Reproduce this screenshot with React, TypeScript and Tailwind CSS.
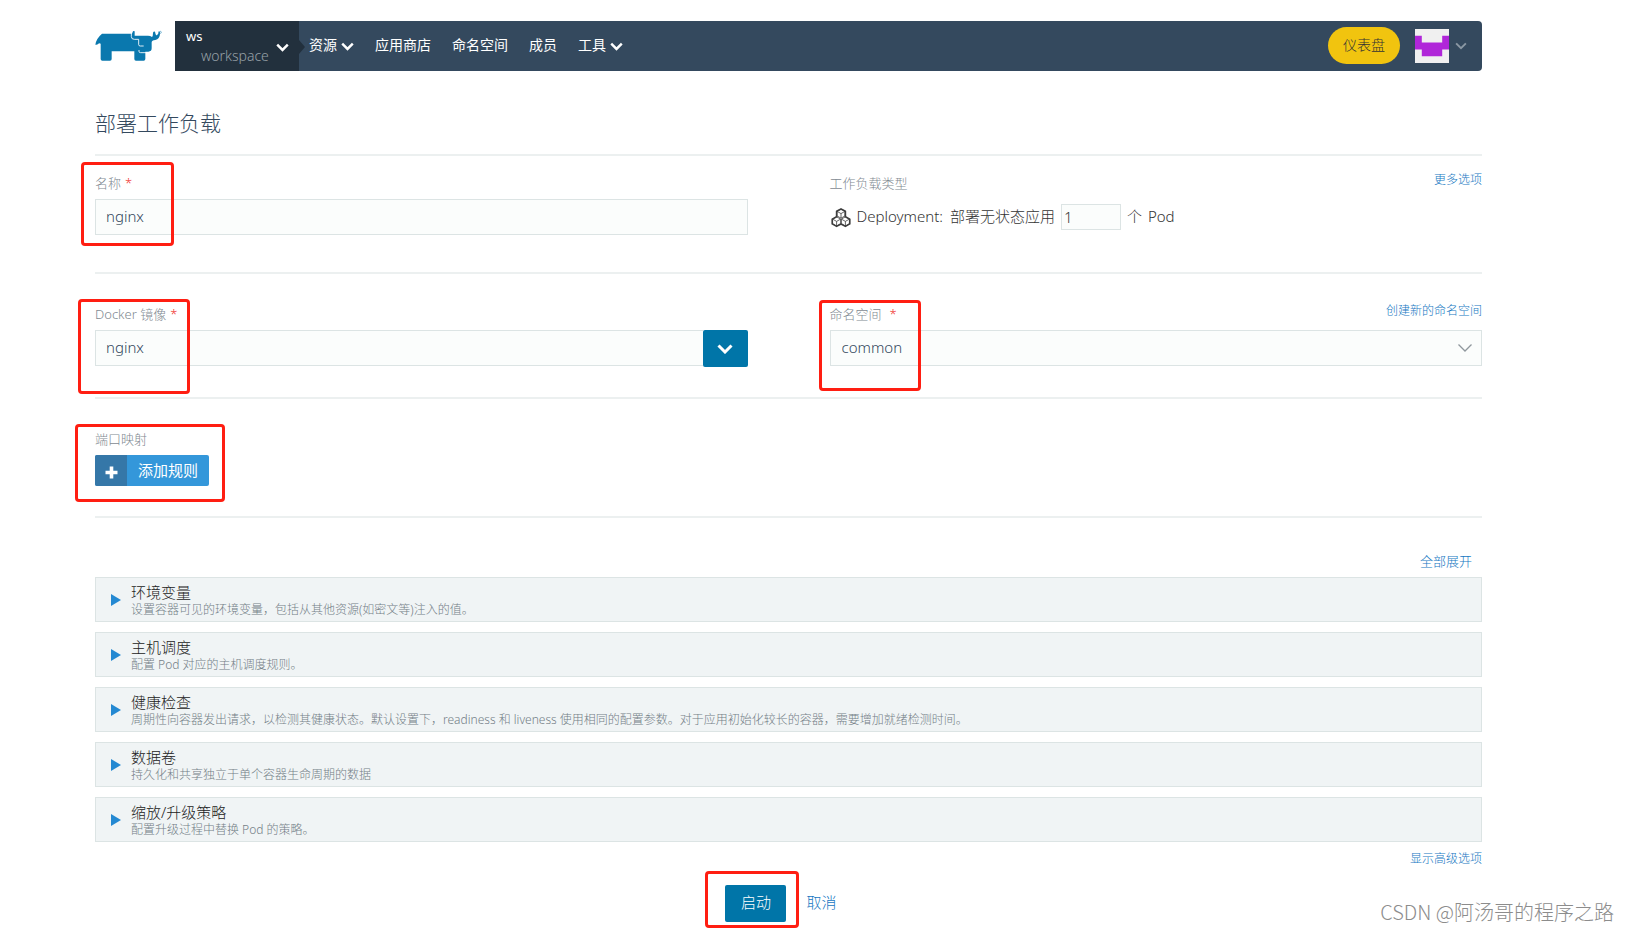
import { useState } from "react";
import type { ReactNode } from "react";

const sections = [
  {
    title: "环境变量",
    detail: "设置容器可见的环境变量，包括从其他资源(如密文等)注入的值。",
  },
  { title: "主机调度", detail: "配置 Pod 对应的主机调度规则。" },
  {
    title: "健康检查",
    detail:
      "周期性向容器发出请求，以检测其健康状态。默认设置下，readiness 和 liveness 使用相同的配置参数。对于应用初始化较长的容器，需要增加就绪检测时间。",
  },
  { title: "数据卷", detail: "持久化和共享独立于单个容器生命周期的数据" },
  { title: "缩放/升级策略", detail: "配置升级过程中替换 Pod 的策略。" },
];

const navItems = [
  { label: "资源", menu: true },
  { label: "应用商店", menu: false },
  { label: "命名空间", menu: false },
  { label: "成员", menu: false },
  { label: "工具", menu: true },
];

const App = () => {
  const [name, setName] = useState("nginx");
  const [image, setImage] = useState("nginx");
  const [scale, setScale] = useState("1");

  return (
    <div className="relative min-h-screen overflow-hidden bg-white pt-[21px] pr-[147px] pl-[95px] font-['Noto_Sans','Noto_Sans_CJK_SC',sans-serif] text-[15px] font-light text-[#333]">
      <Navbar />

      <main>
        <h1 className="mt-9 mb-[15px] text-[21px] leading-8 text-[#34495e]">
          部署工作负载
        </h1>

        <Divider />
        <section className="grid grid-cols-2 gap-x-[82px] pt-[17px] pb-[37px]">
          <div className="relative">
            <Marker className="-top-[11px] -left-[14px] h-[84px] w-[93px]" />
            <Label htmlFor="name" required>
              名称
            </Label>
            <input
              id="name"
              value={name}
              onChange={(e) => setName(e.target.value)}
              className="block h-9 w-full border border-[#dce4e4] bg-[#fbfdfc] px-[10px] pb-[2px] text-[#34495e]"
            />
          </div>
          <div>
            <div className="flex items-start justify-between">
              <Label htmlFor="scale">工作负载类型</Label>
              <TextLink className="text-xs leading-[14px]">更多选项</TextLink>
            </div>
            <div className="flex h-9 items-center">
              <PodsIcon />
              <span className="ml-[6px] flex gap-[7px] pb-[2px] leading-5">
                <span>Deployment:</span>
                <span>部署无状态应用</span>
              </span>
              <input
                id="scale"
                value={scale}
                onChange={(e) => setScale(e.target.value)}
                className="mx-[6px] h-[26px] w-[60px] border border-[#dce4e4] bg-[#fbfdfc] px-[2px]"
              />
              <span className="flex gap-[6px] pb-[2px] leading-5">
                <span>个</span>
                <span>Pod</span>
              </span>
            </div>
          </div>
        </section>

        <Divider />
        <section className="grid grid-cols-2 gap-x-[82px] py-[30px]">
          <div className="relative">
            <Marker className="-top-[5px] -left-[17px] h-[95px] w-[112px]" />
            <Label htmlFor="image" required>
              Docker 镜像
            </Label>
            <div className="flex">
              <input
                id="image"
                value={image}
                onChange={(e) => setImage(e.target.value)}
                className="h-9 min-w-0 flex-1 border border-r-0 border-[#dce4e4] bg-[#fbfdfc] px-[10px] pb-[2px] text-[#34495e]"
              />
              <button
                aria-label="Docker 镜像"
                className="flex h-[37px] w-[45px] items-center justify-center rounded-xs bg-[#0075a8] text-white"
              >
                <Chevron className="h-[10px] w-[16px]" weight={3} />
              </button>
            </div>
          </div>
          <div className="relative">
            <Marker className="-top-1 -left-[11px] h-[91px] w-[102px]" />
            <div className="flex items-start justify-between">
              <Label htmlFor="namespace" required wide>
                命名空间
              </Label>
              <TextLink className="text-xs leading-[14px]">
                创建新的命名空间
              </TextLink>
            </div>
            <div className="relative">
              <select
                id="namespace"
                className="block h-9 w-full appearance-none border border-[#dce4e4] bg-[#fbfdfc] px-[11px] pb-[2px] text-[#34495e]"
              >
                <option>common</option>
              </select>
              <Chevron
                className="pointer-events-none absolute top-[13px] right-[9px] h-[10px] w-[16px] text-[#8f979d]"
                weight={1.3}
              />
            </div>
          </div>
        </section>

        <Divider />
        <section className="py-[30px]">
          <div className="relative">
            <Marker className="-top-[5px] -left-5 h-[78px] w-[150px]" />
            <div className="mb-[6px] text-[13px] leading-5 text-[#7f8a92]">
              端口映射
            </div>
            <button className="flex h-[31px] items-center overflow-hidden rounded-xs bg-[#3497da] text-white">
              <span className="flex h-full w-8 items-center justify-center bg-[#3577a8]">
                <svg viewBox="0 0 13 13" className="mt-1 size-[13px]">
                  <path d="M6.5 0.5v12M0.5 6.5h12" stroke="currentColor" strokeWidth="3.6" />
                </svg>
              </span>
              <span className="px-[11px] pb-px font-normal">添加规则</span>
            </button>
          </div>
        </section>

        <Divider />
        <div className="mt-8 mb-[6px] pr-[10px] text-right leading-5">
          <TextLink className="inline-block text-[13px] leading-5">全部展开</TextLink>
        </div>
        <div className="flex flex-col gap-[10px]">
          {sections.map((s) => (
            <Accordion key={s.title} title={s.title} detail={s.detail} />
          ))}
        </div>
        <div className="mt-[7px] flex justify-end">
          <TextLink className="text-xs leading-5">显示高级选项</TextLink>
        </div>

        <div className="mt-4 flex items-center justify-center gap-5 pr-[15px] pb-[9px]">
          <div className="relative">
            <Marker className="-top-[14px] -left-5 h-[57px] w-[94px]" />
            <button className="h-[37px] w-[61px] rounded-xs bg-[#0075a8] pb-[2px] text-white">
              启动
            </button>
          </div>
          <TextLink className="pb-[2px]">取消</TextLink>
        </div>
      </main>

      <div className="absolute right-[15px] bottom-[5px] font-['Noto_Sans_CJK_SC',sans-serif] text-[20px] leading-7 text-[#8c8c8c]">
        CSDN @阿汤哥的程序之路
      </div>
    </div>
  );
};

const Navbar = () => (
  <header className="flex h-[50px]">
    <a href="#" aria-label="Rancher" className="w-20 pt-[9px]">
      <Logo />
    </a>
    <nav className="flex flex-1 items-center rounded-r-sm bg-[#34495e] text-sm font-normal text-white">
      <button className="relative flex h-full w-[124px] items-center justify-between bg-[#22303d] pr-[10px] pb-px pl-[11px] text-left">
        <span>
          <span className="block text-[13px] leading-5">ws</span>
          <span className="block pl-[15px] text-sm leading-5 font-light text-[#98a1a8]">
            workspace
          </span>
        </span>
        <Chevron className="mt-1 h-[9px] w-[13px]" weight={3} />
        <span className="absolute top-[19px] left-full border-y-[7px] border-l-[6px] border-y-transparent border-l-[#22303d]" />
      </button>
      <ul className="flex gap-[21px] pb-[2px] pl-[10px] text-[14px]">
        {navItems.map((item) => (
          <li key={item.label}>
            <a href="#" className="flex items-center gap-1">
              {item.label}
              {item.menu && <Chevron className="mt-[2px] h-[9px] w-[13px]" weight={3} />}
            </a>
          </li>
        ))}
      </ul>
      <div className="ml-auto flex items-center pr-[15px] pb-px">
        <button className="mr-[15px] h-[37px] w-[72px] rounded-full bg-[#f1c40f] pb-px text-sm font-light text-[#333]">
          仪表盘
        </button>
        <button aria-label="user" className="flex items-center gap-[6px]">
          <svg viewBox="0 0 5 5" className="size-[34px]">
            <path d="M0 0h5v5H0z" fill="#f0f0f0" />
            <path d="M0 1h1v1h3V1h1v2H4v1H1V3H0z" fill="#b026d9" />
          </svg>
          <Chevron className="h-2 w-3 text-[#8b98a4]" weight={2.5} />
        </button>
      </div>
    </nav>
  </header>
);

interface LabelProps {
  htmlFor: string;
  children: ReactNode;
  required?: boolean;
  wide?: boolean;
}

const Label = ({ htmlFor, children, required, wide }: LabelProps) => (
  <label
    htmlFor={htmlFor}
    className={`mb-[6px] flex text-[13px] leading-5 text-[#7f8a92] ${wide ? "gap-2" : "gap-1"}`}
  >
    {children}
    {required && <span className="text-[#f0302c]">*</span>}
  </label>
);

const TextLink = ({
  children,
  className = "",
}: {
  children: ReactNode;
  className?: string;
}) => (
  <a href="#" className={`text-[#1577c2] ${className}`}>
    {children}
  </a>
);

const Divider = () => <hr className="border-t-2 border-[#ecf0f0]" />;

const Marker = ({ className }: { className: string }) => (
  <span
    className={`pointer-events-none absolute z-10 rounded-sm border-3 border-[#ff1e12] ${className}`}
  />
);

const Accordion = ({ title, detail }: { title: string; detail: string }) => (
  <button className="flex h-[45px] items-center border border-[#dce4e4] bg-[#f0f4f5] pl-[15px] text-left">
    <svg viewBox="0 0 10 12" className="mr-[10px] h-3 w-[10px]">
      <path d="M0 0l10 6-10 6z" fill="#2489d2" />
    </svg>
    <span className="pt-[2px]">
      <span className="block text-[15px] leading-[17px] text-[#222]">{title}</span>
      <span className="block text-xs leading-[17px] text-[#737e86]">{detail}</span>
    </span>
  </button>
);

const Chevron = ({ className, weight }: { className: string; weight: number }) => (
  <svg viewBox="0 0 16 10" fill="none" className={className}>
    <path d="M1.5 1.5L8 8l6.5-6.5" stroke="currentColor" strokeWidth={weight} />
  </svg>
);

const hex = "M0-4.6L4-2.3V2.3L0 4.6L-4 2.3V-2.3ZM-4-2.3L0 0L4-2.3M0 0V4.6";

const PodsIcon = () => (
  <svg
    viewBox="0 0 20 20"
    fill="none"
    stroke="#3d3d3d"
    className="mt-[2px] ml-px size-5"
  >
    {["translate(10 5.6)", "translate(5.6 13.4)", "translate(14.4 13.4)"].map((t) => (
      <g key={t} transform={t}>
        <path d={hex} strokeWidth="0.8" />
      </g>
    ))}
    <path
      d="M10 1L14.4 3.3V8.7L18.8 11.1V15.9L14.4 18.4L10 16L5.6 18.4L1.2 15.9V11.1L5.6 8.7V3.3Z"
      strokeWidth="1.6"
      strokeLinejoin="round"
    />
  </svg>
);

const Logo = () => (
  <svg viewBox="46 61 204 93" className="h-[31px] w-[68px]" fill="#0a78ae">
    <path d="M67 72h90l2-5q1-4 6-2v13h40q7 0 12 4 3-3 3-12 0-6 6-4 2 11 5 11 6-2 6-12 5 0 4 8-1 15-14 18-11 1-11 7v18q0 10-10 10h-9v22q0 5-5 5h-23q-5 0-5-5v-23H96v23q0 5-5 5H68q-5 0-5-5v-46q-4-3-7 0-3 4-9 3 3-19 20-33z" />
    <path
      d="M155 64v17q0 8 9 8h13v16q0 4 5 4h10M178 121v4q0 4 5 4h17"
      fill="none"
      stroke="#fff"
      strokeWidth="2.6"
    />
    <circle cx="242" cy="68" r="3" fill="none" stroke="#0a78ae" strokeWidth="1.5" />
  </svg>
);

export default App;
